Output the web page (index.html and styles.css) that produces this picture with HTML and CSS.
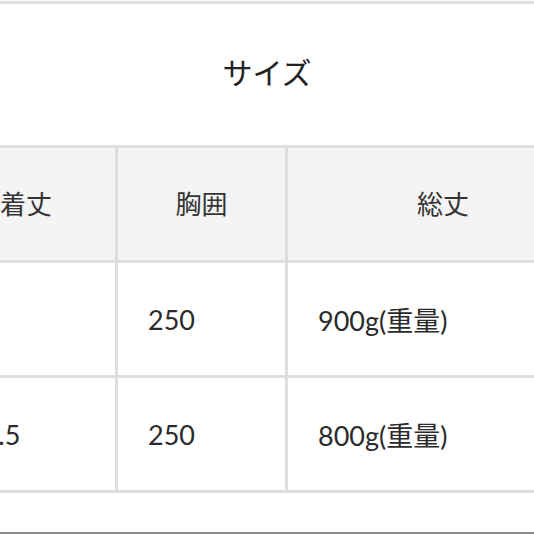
FILE: index.html
```html
<!DOCTYPE html>
<html lang="ja">
<head>
<meta charset="utf-8">
<link rel="stylesheet" href="styles.css">
</head>
<body>
<div class="page">
  <div class="topline"></div>
  <div class="title-area"><h1 class="title">サイズ</h1></div>
  <div class="grid">
    <div class="cell head">着丈</div>
    <div class="cell head">胸囲</div>
    <div class="cell head">総丈</div>
    <div class="cell data"></div>
    <div class="cell data">250</div>
    <div class="cell data">900g(重量)</div>
    <div class="cell data">72.5</div>
    <div class="cell data">250</div>
    <div class="cell data">800g(重量)</div>
  </div>
  <div class="spacer"></div>
  <div class="bottomline"></div>
</div>
</body>
</html>
```
FILE: styles.css
```css
html, body {
  margin: 0;
  padding: 0;
  background: #fff;
  overflow: hidden;
}
.page {
  width: 534px;
  height: 534px;
  overflow: hidden;
  padding-top: 1px;
  box-sizing: border-box;
  font-family: Lato, "Noto Sans CJK JP", sans-serif;
  color: #2b2b2b;
}
.topline {
  height: 3px;
  background: #dedede;
}
.title-area {
  height: 141px;
  display: flex;
  align-items: center;
  justify-content: center;
}
.title {
  margin: 0;
  font-family: "Noto Sans CJK JP", sans-serif;
  font-weight: 400;
  font-size: 30px;
  color: #222;
  padding-bottom: 8px;
}
.grid {
  display: grid;
  grid-template-columns: 178px 167px 310px;
  grid-auto-rows: 112px;
  gap: 3px;
  padding: 3px;
  background: #dedede;
  margin-left: -66px;
  width: max-content;
}
.cell {
  display: flex;
  align-items: center;
  font-size: 27px;
  background: #fff;
}
.head {
  background: #f4f4f4;
  justify-content: center;
  font-family: "Noto Sans CJK JP", sans-serif;
  font-size: 26px;
  color: #333;
  padding-bottom: 3px;
}
.data {
  padding-left: 30px;
  padding-top: 1px;
}
.spacer {
  height: 39px;
}
.bottomline {
  height: 3px;
  background: #8a8a8a;
}
```
